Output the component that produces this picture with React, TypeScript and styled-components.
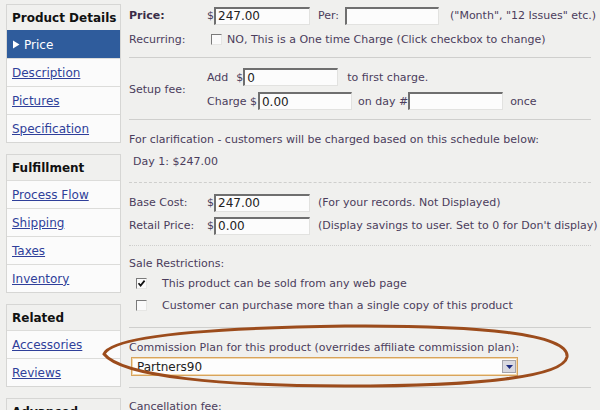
import React from "react";
import styled, { createGlobalStyle } from "styled-components";

const GlobalStyle = createGlobalStyle`
  html, body {
    margin: 0;
    padding: 0;
    background: #f0f0ee;
    overflow: hidden;
  }
  body {
    width: 600px;
    height: 410px;
    font-family: "DejaVu Sans", Verdana, sans-serif;
  }
`;

const Page = styled.div`
  position: relative;
  display: flex;
  align-items: flex-start;
  padding: 4px 0 0 6px;
  height: 406px;
  overflow: hidden;
  color: #4b3d5c;
  font-size: 11px;
`;

const Sidebar = styled.nav`
  width: 115px;
  flex: none;
  display: flex;
  flex-direction: column;
  gap: 11px;
`;

const NavBox = styled.div`
  border: 1px solid #d6d6d4;
  background: #f0f0ee;
`;

const NavHeader = styled.div`
  height: 25px;
  display: flex;
  align-items: center;
  padding-left: 5px;
  font-size: 12px;
  font-weight: bold;
  color: #111;
`;

const NavRow = styled.div<{ $active?: boolean }>`
  height: 27px;
  display: flex;
  align-items: center;
  gap: 4px;
  padding-left: 5px;
  font-size: 12px;
  border-top: 1px solid ${(p) => (p.$active ? "#2f5c9c" : "#dcdcda")};
  background: ${(p) => (p.$active ? "#2f5c9c" : "#fbfbfb")};
  color: ${(p) => (p.$active ? "#fff" : "#2f3f9a")};
  text-decoration: ${(p) => (p.$active ? "none" : "underline")};
`;

const Main = styled.main`
  margin-left: 8px;
  width: 462px;
  flex: none;
  white-space: nowrap;
`;

const Section = styled.div<{ $pt: number; $pb: number }>`
  padding: ${(p) => p.$pt}px 0 ${(p) => p.$pb}px;
`;

const Divider = styled.div<{ $kind?: "solid" | "dashed" | "dotted" }>`
  border-top: 1px ${(p) => p.$kind || "solid"} #cfcfcd;
`;

const Row = styled.div<{ $h: number }>`
  display: flex;
  align-items: center;
  height: ${(p) => p.$h}px;
`;

const Label = styled.span<{ $bold?: boolean }>`
  width: 78px;
  flex: none;
  font-weight: ${(p) => (p.$bold ? "bold" : "normal")};
  color: ${(p) => (p.$bold ? "#3a2c48" : "#4b3d5c")};
`;

const Block = styled.div`
  display: flex;
  align-items: center;
`;

const Lines = styled.div`
  display: flex;
  flex-direction: column;
`;

const Text = styled.span<{ $ml?: number }>`
  margin-left: ${(p) => p.$ml || 0}px;
`;

const TextBox = styled.input<{ $w: number; $ml?: number }>`
  box-sizing: border-box;
  width: ${(p) => p.$w}px;
  height: 18px;
  margin: 0 0 0 ${(p) => p.$ml || 0}px;
  padding: 0 2px;
  border-top: 2px solid #6f6f6f;
  border-left: 2px solid #6f6f6f;
  border-right: 1px solid #e2e2e0;
  border-bottom: 1px solid #e2e2e0;
  background: #fcfcfc;
  font-family: "DejaVu Sans", Verdana, sans-serif;
  font-size: 12px;
  color: #222;
  outline: none;
`;

const Check = styled.span<{ $ml: number }>`
  box-sizing: border-box;
  width: 11px;
  height: 11px;
  flex: none;
  margin-left: ${(p) => p.$ml}px;
  border-top: 1px solid #7a7a7a;
  border-left: 1px solid #7a7a7a;
  border-right: 1px solid #e6e6e4;
  border-bottom: 1px solid #e6e6e4;
  background: #fafafa;
  display: flex;
  align-items: center;
  justify-content: center;
`;

const Select = styled.div`
  box-sizing: border-box;
  width: 387px;
  height: 19px;
  margin: 1px 0 0 2px;
  border: 1px solid #d8a45c;
  box-shadow: inset 0 0 0 1px #f2d9b0;
  background: #fdfdfd;
  display: flex;
  align-items: center;
  justify-content: space-between;
  padding: 0 1px 0 5px;
  font-size: 12px;
  color: #222;
`;

const SelectButton = styled.span`
  box-sizing: border-box;
  width: 14px;
  height: 13px;
  background: #d9d9e0;
  border: 1px solid #a4a4ac;
  display: flex;
  align-items: center;
  justify-content: center;
`;

const Overlay = styled.svg`
  position: absolute;
  left: 0;
  top: 0;
  pointer-events: none;
`;

type NavItem = { label: string; active?: boolean };

const navGroups: { title: string; items: NavItem[] }[] = [
  {
    title: "Product Details",
    items: [
      { label: "Price", active: true },
      { label: "Description" },
      { label: "Pictures" },
      { label: "Specification" },
    ],
  },
  {
    title: "Fulfillment",
    items: [
      { label: "Process Flow" },
      { label: "Shipping" },
      { label: "Taxes" },
      { label: "Inventory" },
    ],
  },
  {
    title: "Related",
    items: [{ label: "Accessories" }, { label: "Reviews" }],
  },
  { title: "Advanced", items: [{ label: "Options" }] },
];

const Tick = () => (
  <svg width="9" height="9" viewBox="0 0 9 9">
    <path d="M1.5 4.2 L3.6 6.6 L7.6 1.6" fill="none" stroke="#111" strokeWidth="1.7" />
  </svg>
);

const App = () => {
  return (
    <Page>
      <GlobalStyle />
      <Sidebar>
        {navGroups.map((group) => (
          <NavBox key={group.title}>
            <NavHeader>{group.title}</NavHeader>
            {group.items.map((item) => (
              <NavRow key={item.label} $active={item.active}>
                {item.active && (
                  <svg width="8" height="9" viewBox="0 0 8 9">
                    <path d="M1 0.5 L7.5 4.5 L1 8.5 Z" fill="#fff" />
                  </svg>
                )}
                {item.label}
              </NavRow>
            ))}
          </NavBox>
        ))}
      </Sidebar>

      <Main>
        <Section $pt={0} $pb={6}>
          <Row $h={23}>
            <Label $bold>Price:</Label>
            <Text>$</Text>
            <TextBox $w={96} defaultValue="247.00" readOnly />
            <Text $ml={8}>Per:</Text>
            <TextBox $w={94} $ml={6} defaultValue="" readOnly />
            <Text $ml={11}>("Month", "12 Issues" etc.)</Text>
          </Row>
          <Row $h={24}>
            <Label>Recurring:</Label>
            <Check $ml={4} />
            <Text $ml={5}>NO, This is a One time Charge (Click checkbox to change)</Text>
          </Row>
        </Section>
        <Divider />

        <Section $pt={7} $pb={6}>
          <Block>
            <Label>Setup fee:</Label>
            <Lines>
              <Row $h={24}>
                <Text>Add</Text>
                <Text $ml={8}>$</Text>
                <TextBox $w={95} defaultValue="0" readOnly />
                <Text $ml={9}>to first charge.</Text>
              </Row>
              <Row $h={24}>
                <Text>Charge $</Text>
                <TextBox $w={94} $ml={1} defaultValue="0.00" readOnly />
                <Text $ml={6}>on day #</Text>
                <TextBox $w={95} defaultValue="" readOnly />
                <Text $ml={7}>once</Text>
              </Row>
            </Lines>
          </Block>
        </Section>
        <Divider />

        <Section $pt={10} $pb={12}>
          <Row $h={18}>
            <Text>For clarification - customers will be charged based on this schedule below:</Text>
          </Row>
          <Row $h={18} style={{ marginTop: 4 }}>
            <Text $ml={4}>Day 1: $247.00</Text>
          </Row>
        </Section>
        <Divider $kind="dashed" />

        <Section $pt={8} $pb={8}>
          <Row $h={23}>
            <Label>Base Cost:</Label>
            <Text>$</Text>
            <TextBox $w={96} defaultValue="247.00" readOnly />
            <Text $ml={8}>(For your records. Not Displayed)</Text>
          </Row>
          <Row $h={23}>
            <Label>Retail Price:</Label>
            <Text>$</Text>
            <TextBox $w={96} defaultValue="0.00" readOnly />
            <Text $ml={8}>(Display savings to user. Set to 0 for Don't display)</Text>
          </Row>
        </Section>
        <Divider $kind="dotted" />

        <Section $pt={8} $pb={11}>
          <Row $h={18}>
            <Text>Sale Restrictions:</Text>
          </Row>
          <Row $h={22}>
            <Check $ml={7}>
              <Tick />
            </Check>
            <Text $ml={15}>This product can be sold from any web page</Text>
          </Row>
          <Row $h={22}>
            <Check $ml={7} />
            <Text $ml={15}>Customer can purchase more than a single copy of this product</Text>
          </Row>
        </Section>
        <Divider />

        <Section $pt={10} $pb={11}>
          <Row $h={18}>
            <Text>Commission Plan for this product (overrides affiliate commission plan):</Text>
          </Row>
          <Select>
            <span>Partners90</span>
            <SelectButton>
              <svg width="7" height="4" viewBox="0 0 7 4">
                <path d="M0 0 L7 0 L3.5 4 Z" fill="#1b2a80" />
              </svg>
            </SelectButton>
          </Select>
        </Section>
        <Divider />

        <Section $pt={9} $pb={0}>
          <Row $h={18}>
            <Text>Cancellation fee:</Text>
          </Row>
        </Section>
      </Main>

      <Overlay width="600" height="410" viewBox="0 0 600 410">
        <path
          d="M104 354 C 112 336, 210 328, 345 326 C 480 325, 570 334, 567 357 C 563 377, 480 386, 345 386 C 225 386, 122 377, 104 354 Z"
          fill="none"
          stroke="#9c4c1c"
          strokeWidth="3"
        />
      </Overlay>
    </Page>
  );
};

export default App;
